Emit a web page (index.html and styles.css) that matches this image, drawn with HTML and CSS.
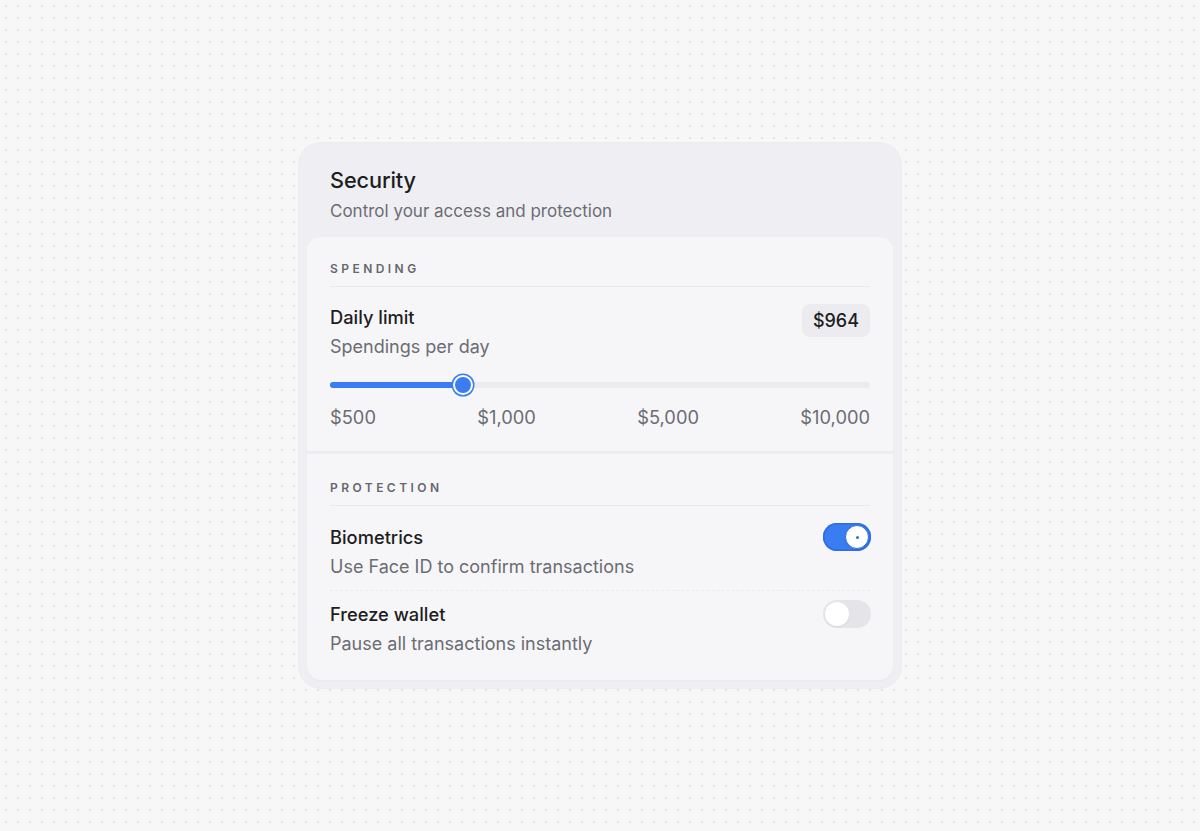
FILE: index.html
```html
<!DOCTYPE html>
<html lang="en">
<head>
<meta charset="utf-8">
<title>Security</title>
<link rel="stylesheet" href="styles.css">
</head>
<body>
<main class="page">
  <section class="card">
    <header class="card-head">
      <h1 class="title">Security</h1>
      <p class="subtitle">Control your access and protection</p>
    </header>
    <div class="panel">
      <div class="section">
        <div class="section-label">SPENDING</div>
        <div class="row">
          <div class="row-text">
            <div class="row-title">Daily limit</div>
            <div class="row-sub">Spendings per day</div>
          </div>
          <div class="badge">$964</div>
        </div>
        <div class="slider">
          <div class="track"><div class="fill" style="width:24.4%"></div><div class="thumb" style="left:24.4%"></div></div>
        </div>
        <div class="ticks">
          <span>$500</span><span>$1,000</span><span>$5,000</span><span>$10,000</span>
        </div>
      </div>
      <div class="section section-2">
        <div class="section-label">PROTECTION</div>
        <div class="row toggle-row">
          <div class="row-text">
            <div class="row-title">Biometrics</div>
            <div class="row-sub">Use Face ID to confirm transactions</div>
          </div>
          <div class="toggle on"><span class="knob"></span></div>
        </div>
        <div class="row toggle-row second">
          <div class="row-text">
            <div class="row-title">Freeze wallet</div>
            <div class="row-sub">Pause all transactions instantly</div>
          </div>
          <div class="toggle"><span class="knob"></span></div>
        </div>
      </div>
    </div>
  </section>
</main>
</body>
</html>
```

FILE: styles.css
```css
* { box-sizing: border-box; }
html, body { margin: 0; padding: 0; }
body {
  width: 1200px;
  height: 831px;
  background-color: #f7f7f7;
  background-image: radial-gradient(circle, #e2e2e2 0.9px, transparent 1.3px);
  background-size: 12px 12px;
  background-position: 0 0;
  font-family: Inter, "Noto Sans", sans-serif;
  color: #1d1d22;
}
.page {
  display: flex;
  justify-content: center;
  padding-top: 143px;
}
.card {
  width: 602px;
  background: #efeff3;
  border-radius: 22px;
  padding: 0 8px 8px;
  box-shadow: 0 0 0 1px #ececf0;
}
.card-head {
  padding: 23px 23px 14px;
}
.title {
  margin: 0;
  font-size: 21.7px;
  line-height: 28px;
  font-weight: 500;
  color: #1d1d22;
  letter-spacing: -0.1px;
}
.subtitle {
  margin: 5px 0 0;
  font-size: 17px;
  line-height: 24px;
  color: #6c6c74;
}
.panel {
  background: #f6f6f8;
  border-radius: 14px;
  box-shadow: 0 1px 2px rgba(0,0,0,0.03);
}
.section {
  padding: 24px 23px 22px;
}
.section-2 {
  border-top: 3px solid #ededf1;
  padding-top: 26px;
  padding-bottom: 24px;
}
.section-label {
  font-size: 12px;
  line-height: 16px;
  font-weight: 600;
  letter-spacing: 3.45px;
  color: #66666e;
  padding-bottom: 9px;
  border-bottom: 1px solid #e8e8ec;
}
.row {
  display: flex;
  justify-content: space-between;
  align-items: flex-start;
  margin-top: 18px;
}
.row-title {
  font-size: 18.3px;
  line-height: 24px;
  font-weight: 500;
  color: #1d1d22;
}
.row-sub {
  margin-top: 6px;
  font-size: 18px;
  line-height: 24px;
  color: #6c6c74;
}
.badge {
  margin-top: -1px;
  height: 33px;
  padding: 0 11px;
  border-radius: 8px;
  background: #ececf0;
  font-size: 18px;
  font-weight: 500;
  line-height: 33px;
  color: #1d1d22;
}
.slider {
  margin-top: 23px;
}
.track {
  position: relative;
  height: 6px;
  border-radius: 3px;
  background: #ebebef;
}
.fill {
  height: 6px;
  border-radius: 3px;
  background: #3a7cf2;
}
.thumb {
  position: absolute;
  top: 50%;
  width: 20px;
  height: 20px;
  margin: -10px 0 0 -9px;
  border-radius: 50%;
  background: #3a7cf2;
  border: 2px solid #ffffff;
  box-shadow: 0 0 0 1.5px #3a7cf2;
}
.ticks {
  display: flex;
  justify-content: space-between;
  margin-top: 17px;
  font-size: 18.3px;
  line-height: 24px;
  color: #6c6c74;
}
.toggle-row {
  margin-top: 19px;
}
.toggle-row .toggle { margin-top: -2px; }
.toggle-row.second {
  margin-top: 11px;
  padding-top: 11px;
  border-top: 1px dashed #ebebef;
}
.toggle {
  position: relative;
  width: 48px;
  height: 28px;
  margin-right: -1px;
  border-radius: 14px;
  background: #e5e5e9;
  flex: none;
}
.toggle .knob {
  position: absolute;
  top: 2px;
  left: 2px;
  width: 24px;
  height: 24px;
  border-radius: 50%;
  background: #ffffff;
  box-shadow: 0 1px 2px rgba(0,0,0,0.06);
}
.toggle.on {
  background: #3a7cf2;
  box-shadow: inset 0 0 0 1.5px #2f6de0;
}
.toggle.on .knob {
  left: 22px;
  border: 1.5px solid #2f6de0;
}
.toggle.on .knob::after {
  content: "";
  position: absolute;
  top: 50%;
  left: 50%;
  width: 3px;
  height: 3px;
  margin: -1.5px 0 0 -1.5px;
  border-radius: 50%;
  background: #2f6de0;
}
```
